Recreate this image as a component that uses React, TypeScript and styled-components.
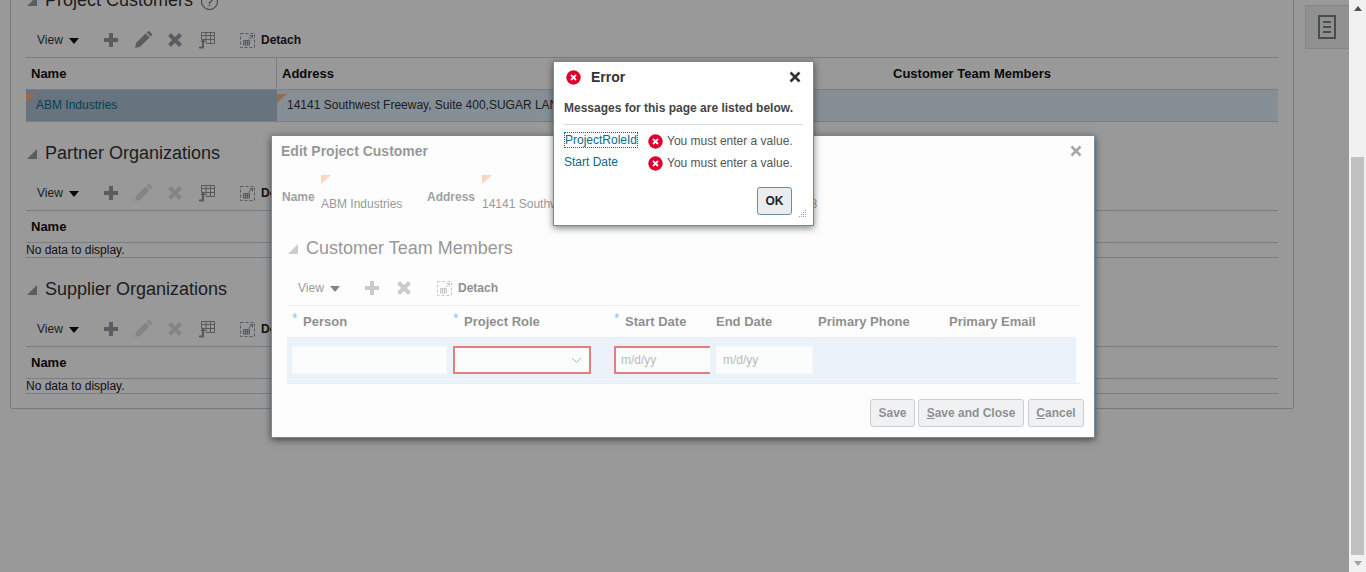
import React from "react";
import styled, { createGlobalStyle } from "styled-components";

const GlobalStyle = createGlobalStyle`
  html, body {
    margin: 0;
    height: 100%;
    overflow: hidden;
  }
  body {
    font-family: "Liberation Sans", Arial, sans-serif;
    font-size: 12px;
    color: #333;
    background: #fff;
  }
`;

const Shell = styled.div`
  display: flex;
  height: 572px;
`;

const Main = styled.div`
  position: relative;
  flex: 1;
  display: flex;
  align-items: flex-start;
  overflow: hidden;
`;

const Panel = styled.div`
  box-sizing: border-box;
  width: 1284px;
  margin: -40px 0 0 10px;
  padding: 24px 15px 14px;
  border: 1px solid #c4ced7;
  border-radius: 2px;
`;

const SideTab = styled.div`
  box-sizing: border-box;
  width: 44px;
  height: 44px;
  margin: 5px 0 0 11px;
  padding-right: 2px;
  display: flex;
  align-items: center;
  justify-content: center;
  background: #f0f0f0;
  border: 1px solid #dcdcdc;
  border-right: 0;
`;

const Section = styled.section`
  & + & {
    margin-top: 16px;
  }
`;

const Heading = styled.h2`
  margin: 0 0 8px;
  height: 30px;
  display: flex;
  align-items: center;
  padding-left: 1px;
  font-size: 18px;
  font-weight: 400;
  color: #333;
  white-space: nowrap;
`;

const Disclosure = styled.span`
  width: 0;
  height: 0;
  margin: 1px 8px 0 0;
  border-style: solid;
  border-width: 0 0 10px 10px;
  border-color: transparent transparent #999ca0 transparent;
`;

const HelpMark = styled.span`
  box-sizing: border-box;
  width: 17px;
  height: 17px;
  margin: 3px 0 0 8px;
  display: flex;
  align-items: center;
  justify-content: center;
  border: 1.5px solid #555;
  border-radius: 50%;
  font-size: 12px;
  color: #555;
`;

const Toolbar = styled.div`
  height: 34px;
  display: flex;
  align-items: center;
  padding: 0 0 0 11px;
  white-space: nowrap;
`;

const ViewMenu = styled.div`
  width: 58px;
  display: flex;
  align-items: center;
  gap: 6px;
`;

const MenuCaret = styled.span`
  width: 0;
  height: 0;
  margin-top: 2px;
  border-style: solid;
  border-width: 6px 5px 0;
  border-color: #111 transparent transparent;
`;

const ToolButton = styled.span<{ $off?: boolean; $nudge?: number }>`
  width: 32px;
  display: flex;
  justify-content: center;
  padding-right: ${(p) => p.$nudge || 0}px;
  box-sizing: border-box;
  color: ${(p) => (p.$off ? "#d9dee2" : "#959ca2")};
`;

const DetachButton = styled.span`
  margin-left: 17px;
  display: flex;
  align-items: center;
  gap: 6px;
  font-weight: 700;
  color: #222;
`;

const Table = styled.div`
  border-top: 1px solid #c8d4dd;
`;

const GridRow = styled.div<{ $cols: string; $height: number; $bg?: string }>`
  box-sizing: border-box;
  display: grid;
  grid-template-columns: ${(p) => p.$cols};
  height: ${(p) => p.$height}px;
  background: ${(p) => p.$bg || "transparent"};
  border-bottom: 1px solid #c8d4dd;
`;

const HeadCell = styled.div<{ $divider?: boolean }>`
  display: flex;
  align-items: center;
  padding-left: 5px;
  font-size: 13px;
  font-weight: 700;
  color: #111;
  white-space: nowrap;
  border-right: ${(p) => (p.$divider ? "1px solid #c8d4dd" : "0")};
`;

const BodyCell = styled.div<{ $bg?: string }>`
  position: relative;
  display: flex;
  align-items: center;
  padding: 0 0 2px 10px;
  white-space: nowrap;
  overflow: hidden;
  background: ${(p) => p.$bg || "transparent"};
`;

const Flag = styled.span<{ $top: number }>`
  position: absolute;
  left: 0;
  top: ${(p) => p.$top}px;
  width: 0;
  height: 0;
  border-style: solid;
  border-width: 9px 10px 0 0;
  border-color: #ffb27a transparent transparent transparent;
`;

const Link = styled.a`
  color: #0b6a8c;
  text-decoration: none;
`;

const EmptyRow = styled.div`
  box-sizing: border-box;
  height: 15px;
  line-height: 14px;
  border-bottom: 1px solid #c8d4dd;
  color: #222;
`;

const Scrim = styled.div`
  position: absolute;
  inset: 0;
  background: rgba(0, 0, 0, 0.4);
`;

const EditDialog = styled.div`
  position: absolute;
  left: 271px;
  top: 135px;
  box-sizing: border-box;
  width: 824px;
  height: 303px;
  padding: 1px;
  background: #fdfdfd;
  border: 1px solid #6f8ca3;
  box-shadow: 0 2px 7px rgba(0, 0, 0, 0.55);
`;

/* the dialog sits behind the error popup's glass pane, so all of it is washed out */
const Washed = styled.div`
  height: 100%;
  opacity: 0.5;
  overflow: hidden;
`;

const EditTitleBar = styled.div`
  height: 28px;
  display: flex;
  align-items: center;
  justify-content: space-between;
  padding: 0 11px 0 8px;
  font-size: 14px;
  font-weight: 700;
  color: #333;
  svg {
    color: #555;
  }
`;

const FormRow = styled.div`
  display: grid;
  grid-template-columns: 39px 106px 55px 1fr;
  height: 45px;
  padding: 10px 0 0 9px;
  box-sizing: border-box;
  white-space: nowrap;
`;

const FormLabel = styled.div`
  margin-top: 15px;
  line-height: 14px;
  font-weight: 700;
  color: #444;
`;

const FormValue = styled.div`
  position: relative;
  padding-top: 22px;
  line-height: 14px;
`;

const TeamSection = styled.div`
  margin-top: 23px;
  padding-left: 14px;
`;

const TeamTable = styled.div`
  width: 793px;
  border-top: 1px solid #d8dfe5;
`;

const TeamHead = styled(GridRow)`
  border-bottom: 0;
`;

const TeamRow = styled.div`
  box-sizing: border-box;
  height: 46px;
  border-bottom: 1px solid #d8dfe5;
`;

const TeamRowFill = styled(GridRow)`
  width: 789px;
  border-bottom: 0;
  background: #dde8f7;
  align-items: center;
`;

const TeamHeadCell = styled(HeadCell)`
  color: #222;
  border-bottom: 1px solid #d8dfe5;
  margin-right: 1px;
`;

const Required = styled.span`
  width: 11px;
  margin-top: -7px;
  font-size: 14px;
  font-weight: 400;
  color: #2c87d6;
`;

const InputCell = styled.div`
  padding-left: 5px;
`;

const Field = styled.div<{ $width: number; $invalid?: boolean; $open?: boolean }>`
  box-sizing: border-box;
  width: ${(p) => p.$width}px;
  height: 28px;
  margin-top: -1px;
  display: flex;
  align-items: center;
  justify-content: space-between;
  padding: 0 7px 0 ${(p) => (p.$invalid ? 5 : 6)}px;
  background: #fbfcfc;
  color: #777;
  border: ${(p) => (p.$invalid ? "2px solid #cc0000" : "1px solid #f2f4f6")};
  border-right-width: ${(p) => (p.$open ? "0" : p.$invalid ? "2px" : "1px")};
`;

const DialogFooter = styled.div`
  margin-top: 15px;
  padding-right: 9px;
  display: flex;
  justify-content: flex-end;
`;

const ActionButton = styled.button<{ $width: number; $gap?: number }>`
  width: ${(p) => p.$width}px;
  height: 28px;
  margin-left: ${(p) => p.$gap || 0}px;
  padding: 0;
  font: 700 12px "Liberation Sans", Arial, sans-serif;
  color: #222;
  background: #e3e7eb;
  border: 1px solid #8fa5b7;
  border-radius: 3px;
`;

const ErrorDialog = styled.div`
  position: absolute;
  left: 553px;
  top: 61px;
  box-sizing: border-box;
  width: 261px;
  height: 165px;
  padding: 1px;
  background: #fff;
  border: 1px solid #6f8ca3;
  box-shadow: 0 2px 7px rgba(0, 0, 0, 0.5);
`;

const ErrorHeader = styled.div`
  height: 28px;
  display: flex;
  align-items: center;
  padding: 0 11px 0 11px;
  font-size: 14px;
  font-weight: 700;
  color: #333;
  svg:last-child {
    margin-left: auto;
  }
`;

const ErrorTitle = styled.span`
  margin-left: 10px;
`;

const ErrorBody = styled.div`
  padding: 10px 9px 0;
`;

const Lead = styled.div`
  line-height: 14px;
  padding-bottom: 9px;
  font-weight: 700;
  color: #444;
  border-bottom: 1px solid #d3dde5;
  white-space: nowrap;
`;

const MessageList = styled.div`
  margin-top: 5px;
  display: grid;
  grid-template-columns: 84px 1fr;
  grid-auto-rows: 22px;
`;

const MessageLink = styled(Link) <{ $focused?: boolean }>`
  justify-self: start;
  align-self: start;
  margin-top: 2px;
  padding: 1px 1px 1px ${(p) => (p.$focused ? 1 : 0)}px;
  line-height: 14px;
  outline: ${(p) => (p.$focused ? "1px dotted #0b6a8c" : "0")};
  outline-offset: -1px;
`;

const MessageText = styled.div`
  display: flex;
  align-items: center;
  gap: 4px;
  height: 20px;
  margin-top: 1px;
  color: #555;
  white-space: nowrap;
`;

const ErrorFooter = styled.div`
  margin-top: 13px;
  padding-right: 20px;
  display: flex;
  justify-content: flex-end;
`;

const OkButton = styled.button`
  width: 35px;
  height: 28px;
  padding: 0;
  font: 700 12px "Liberation Sans", Arial, sans-serif;
  color: #222;
  background: #e9edf0;
  border: 1px solid #6f8ca3;
  border-radius: 3px;
`;

const Grip = styled.svg`
  position: absolute;
  right: 6px;
  bottom: 7px;
`;

const Scrollbar = styled.div`
  width: 17px;
  display: flex;
  flex-direction: column;
  align-items: center;
  background: #f1f1f1;
`;

const ScrollUp = styled.span`
  width: 0;
  height: 0;
  margin-top: 6px;
  border-style: solid;
  border-width: 0 4px 5px;
  border-color: transparent transparent #505050;
`;

const Thumb = styled.div`
  width: 13px;
  height: 398px;
  margin-top: 146px;
  background: #c1c1c1;
`;

const ScrollDown = styled.span`
  width: 0;
  height: 0;
  margin-top: 6px;
  border-style: solid;
  border-width: 5px 4px 0;
  border-color: #a3a3a3 transparent transparent;
`;

const PlusIcon = () => (
  <svg width="14" height="14" viewBox="0 0 14 14" fill="currentColor">
    <path d="M5 0h4v5h5v4H9v5H5V9H0V5h5z" />
  </svg>
);

const PencilIcon = () => (
  <svg width="18" height="18" viewBox="0 0 18 18" fill="currentColor">
    <path d="M1 17l1.2-5.2L11.6 2.4l4 4-9.4 9.4zM12.6 1.4l1-1a1.4 1.4 0 0 1 2 0l2 2a1.4 1.4 0 0 1 0 2l-1 1z" />
  </svg>
);

const CrossIcon = () => (
  <svg width="16" height="16" viewBox="0 0 16 16" stroke="currentColor" strokeWidth="4" fill="none">
    <path d="M2.5 2.5l11 11M13.5 2.5l-11 11" />
  </svg>
);

const ExportIcon = () => (
  <svg width="17" height="18" viewBox="0 0 17 18" fill="none" stroke="#8f969c" strokeWidth="1">
    <path d="M3.5 1.5h13v11h-8M3.5 1.5v7M3.5 4.5h13M3.5 8.5h13M8 1.5v11M12.5 1.5v11" />
    <path d="M1 16.5h4V10" strokeWidth="2" />
    <path d="M2.5 11L5 7.5 7.5 11z" fill="#8f969c" stroke="none" />
  </svg>
);

const DetachIcon = () => (
  <svg width="15" height="15" viewBox="0 0 15 15" fill="none" stroke="#8f969c" strokeWidth="1">
    <path d="M.5.5h14v14H.5z" strokeDasharray="3 2" />
    <path d="M3.5 7.5h6v4.5h-6zM3.5 9.7h6M5.5 7.5V12M7.5 7.5V12" />
    <path d="M8.5 6.5l4-4M9.5 2.5h3v3" />
  </svg>
);

const CloseIcon = ({ size = 12 }: { size?: number }) => (
  <svg width={size} height={size} viewBox="0 0 12 12" stroke="currentColor" strokeWidth="2.6" fill="none">
    <path d="M1.5 1.5l9 9M10.5 1.5l-9 9" />
  </svg>
);

const ErrorIcon = () => (
  <svg width="15" height="15" viewBox="0 0 15 15">
    <circle cx="7.5" cy="7.5" r="7.2" fill="#e0002b" />
    <path d="M5 5l5 5M10 5l-5 5" stroke="#fff" strokeWidth="1.8" />
  </svg>
);

const ChevronIcon = () => (
  <svg width="11" height="7" viewBox="0 0 11 7" fill="none" stroke="#777" strokeWidth="1">
    <path d="M1 1l4.5 4.5L10 1" />
  </svg>
);

const PageIcon = () => (
  <svg width="18" height="24" viewBox="0 0 18 24" fill="none" stroke="#7a8187" strokeWidth="2">
    <path d="M1 1h16v22H1zM5 7h8M5 12h8M5 17h8" />
  </svg>
);

const GripIcon = () => (
  <Grip width="9" height="9" viewBox="0 0 9 9" fill="#8fa0ad">
    {[[7, 1], [5, 3], [7, 3], [3, 5], [5, 5], [7, 5], [1, 7], [3, 7], [5, 7], [7, 7]].map(([x, y]) => (
      <rect key={`${x}-${y}`} x={x} y={y} width="1" height="1" />
    ))}
  </Grip>
);

function PageToolbar({ canEdit }: { canEdit: boolean }) {
  return (
    <Toolbar>
      <ViewMenu>
        View <MenuCaret />
      </ViewMenu>
      <ToolButton><PlusIcon /></ToolButton>
      <ToolButton $off={!canEdit}><PencilIcon /></ToolButton>
      <ToolButton $off={!canEdit}><CrossIcon /></ToolButton>
      <ToolButton $nudge={2}><ExportIcon /></ToolButton>
      <DetachButton>
        <DetachIcon /> Detach
      </DetachButton>
    </Toolbar>
  );
}

function EmptyOrgSection({ title }: { title: string }) {
  return (
    <Section>
      <Heading>
        <Disclosure />
        {title}
      </Heading>
      <PageToolbar canEdit={false} />
      <Table>
        <GridRow $cols="1fr" $height={32}>
          <HeadCell>Name</HeadCell>
        </GridRow>
        <EmptyRow>No data to display.</EmptyRow>
      </Table>
    </Section>
  );
}

const ADDRESS = "14141 Southwest Freeway, Suite 400,SUGAR LAND,TX 77478";
const CUSTOMER_COLS = "251px 611px 1fr";
const TEAM_COLS = "161px 161px 102px 102px 131px 132px";

export default function App() {
  return (
    <>
      <GlobalStyle />
      <Shell>
        <Main>
          <Panel>
            <Section>
              <Heading>
                <Disclosure />
                Project Customers
                <HelpMark>?</HelpMark>
              </Heading>
              <PageToolbar canEdit />
              <Table>
                <GridRow $cols={CUSTOMER_COLS} $height={32}>
                  <HeadCell $divider>Name</HeadCell>
                  <HeadCell>Address</HeadCell>
                  <HeadCell>Customer Team Members</HeadCell>
                </GridRow>
                <GridRow $cols={CUSTOMER_COLS} $height={32} $bg="#e0eefa">
                  <BodyCell $bg="#acc0d2">
                    <Flag $top={4} />
                    <Link>ABM Industries</Link>
                  </BodyCell>
                  <BodyCell>
                    <Flag $top={4} />
                    {ADDRESS}
                  </BodyCell>
                  <BodyCell />
                </GridRow>
              </Table>
            </Section>
            <EmptyOrgSection title="Partner Organizations" />
            <EmptyOrgSection title="Supplier Organizations" />
          </Panel>
          <SideTab>
            <PageIcon />
          </SideTab>
          <Scrim />

          <EditDialog>
            <Washed>
              <EditTitleBar>
                Edit Project Customer
                <CloseIcon />
              </EditTitleBar>
              <FormRow>
                <FormLabel>Name</FormLabel>
                <FormValue>
                  <Flag $top={0} />
                  ABM Industries
                </FormValue>
                <FormLabel>Address</FormLabel>
                <FormValue>
                  <Flag $top={0} />
                  {ADDRESS}
                </FormValue>
              </FormRow>
              <TeamSection>
                <Heading>
                  <Disclosure />
                  Customer Team Members
                </Heading>
                <Toolbar>
                  <ViewMenu>
                    View <MenuCaret />
                  </ViewMenu>
                  <ToolButton><PlusIcon /></ToolButton>
                  <ToolButton><CrossIcon /></ToolButton>
                  <DetachButton>
                    <DetachIcon /> Detach
                  </DetachButton>
                </Toolbar>
                <TeamTable>
                  <TeamHead $cols={TEAM_COLS} $height={32}>
                    <TeamHeadCell><Required>*</Required>Person</TeamHeadCell>
                    <TeamHeadCell><Required>*</Required>Project Role</TeamHeadCell>
                    <TeamHeadCell><Required>*</Required>Start Date</TeamHeadCell>
                    <TeamHeadCell>End Date</TeamHeadCell>
                    <TeamHeadCell>Primary Phone</TeamHeadCell>
                    <TeamHeadCell>Primary Email</TeamHeadCell>
                  </TeamHead>
                  <TeamRow>
                    <TeamRowFill $cols={TEAM_COLS} $height={45}>
                      <InputCell><Field $width={155} /></InputCell>
                      <InputCell><Field $width={138} $invalid><span /><ChevronIcon /></Field></InputCell>
                      <InputCell><Field $width={96} $invalid $open>m/d/yy</Field></InputCell>
                      <InputCell><Field $width={97}>m/d/yy</Field></InputCell>
                    </TeamRowFill>
                  </TeamRow>
                </TeamTable>
              </TeamSection>
              <DialogFooter>
                <ActionButton $width={45}>Save</ActionButton>
                <ActionButton $width={106} $gap={3}><u>S</u>ave and Close</ActionButton>
                <ActionButton $width={56} $gap={4}><u>C</u>ancel</ActionButton>
              </DialogFooter>
            </Washed>
          </EditDialog>

          <ErrorDialog>
            <ErrorHeader>
              <ErrorIcon />
              <ErrorTitle>Error</ErrorTitle>
              <CloseIcon />
            </ErrorHeader>
            <ErrorBody>
              <Lead>Messages for this page are listed below.</Lead>
              <MessageList>
                <MessageLink $focused>ProjectRoleId</MessageLink>
                <MessageText><ErrorIcon /> You must enter a value.</MessageText>
                <MessageLink>Start Date</MessageLink>
                <MessageText><ErrorIcon /> You must enter a value.</MessageText>
              </MessageList>
            </ErrorBody>
            <ErrorFooter>
              <OkButton>OK</OkButton>
            </ErrorFooter>
            <GripIcon />
          </ErrorDialog>
        </Main>
        <Scrollbar>
          <ScrollUp />
          <Thumb />
          <ScrollDown />
        </Scrollbar>
      </Shell>
    </>
  );
}
